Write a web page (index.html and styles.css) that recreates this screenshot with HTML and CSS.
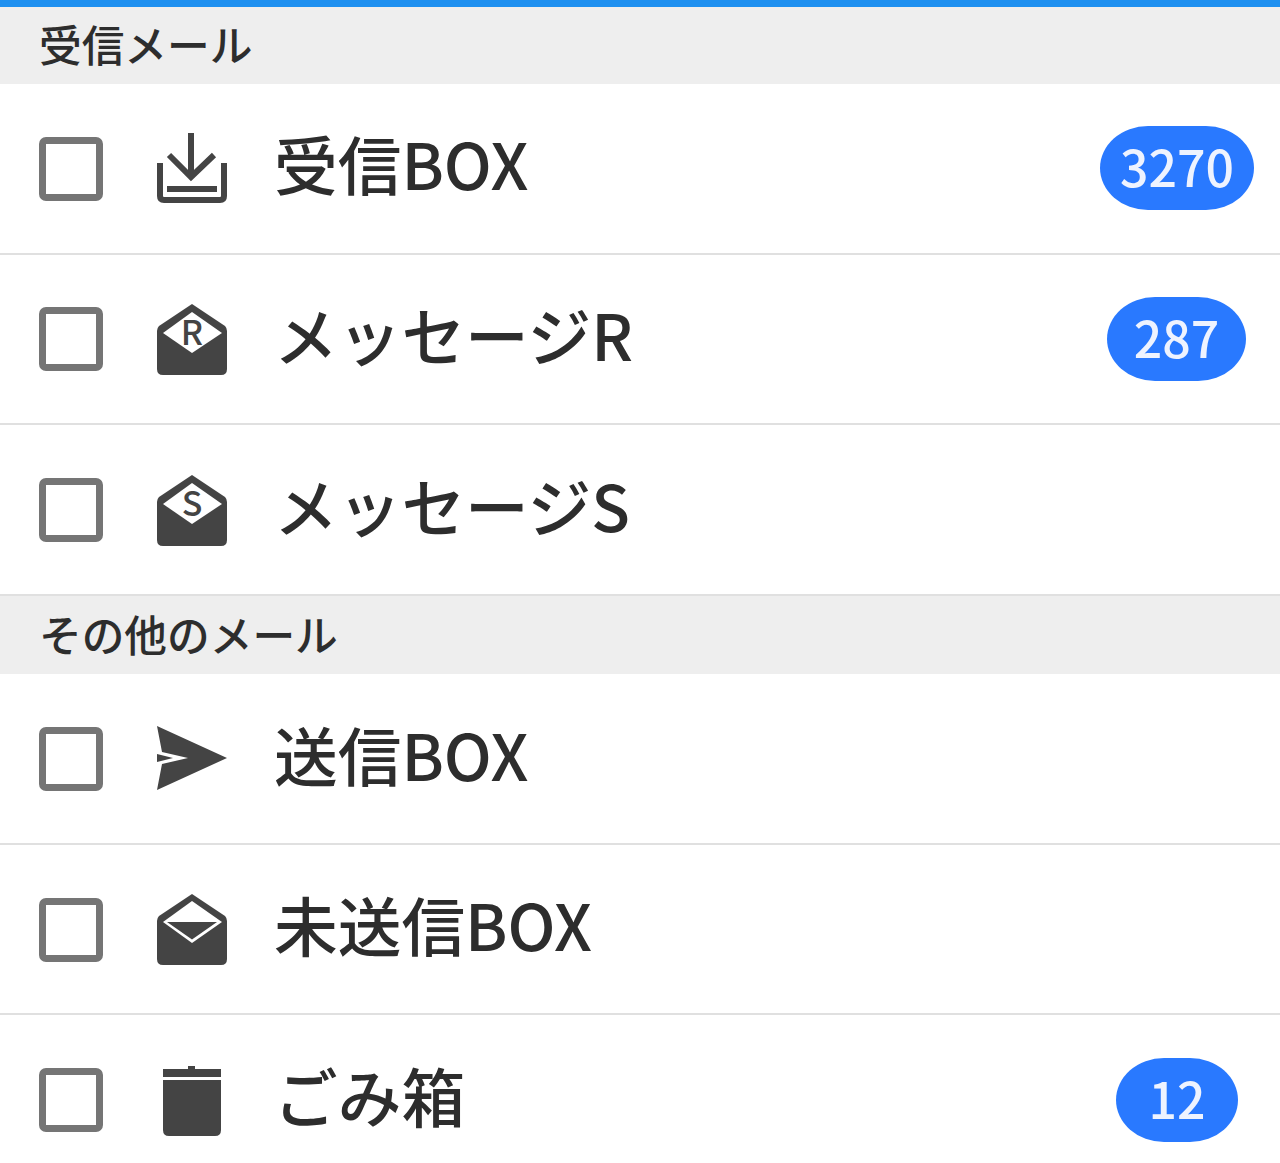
FILE: index.html
```html
<!DOCTYPE html>
<html lang="ja">
<head>
  <meta charset="UTF-8">
  <meta name="viewport" content="width=device-width, initial-scale=1.0">
  <title>メール</title>
  <link rel="stylesheet" href="styles.css">
</head>
<body>

<div class="top-bar"></div>

<div class="mail-page">
  <!-- 受信メール -->
  <h2 class="section-title">受信メール</h2>
  <ul class="folder-list">
    <li class="folder-row">
      <span class="check"></span>
      <svg class="folder-icon" viewBox="0 0 74 74">
        <path class="line" d="M36 1V45M14 23L36 45L59 23"/>
        <rect class="fill" x="12" y="54" width="50" height="6"/>
        <path class="line" d="M5 31V64q0 4 4 4H65q4 0 4-4V31"/>
      </svg>
      <span class="folder-name">受信BOX</span>
      <span class="badge badge-4">3270</span>
    </li>
    <li class="folder-row">
      <span class="check"></span>
      <svg class="folder-icon" viewBox="0 0 74 74">
        <path class="fill" d="M37 1L70 23q2 2 2 5V66q0 6-6 6H8q-6 0-6-6V28q0-3 2-5Z"/>
        <path class="hole" d="M37 9L67 30L37 50L8 30Z"/>
        <text class="icon-letter" x="37" y="42">R</text>
      </svg>
      <span class="folder-name">メッセージR</span>
      <span class="badge badge-3">287</span>
    </li>
    <li class="folder-row">
      <span class="check"></span>
      <svg class="folder-icon" viewBox="0 0 74 74">
        <path class="fill" d="M37 1L70 23q2 2 2 5V66q0 6-6 6H8q-6 0-6-6V28q0-3 2-5Z"/>
        <path class="hole" d="M37 9L67 30L37 50L8 30Z"/>
        <text class="icon-letter" x="37" y="42">S</text>
      </svg>
      <span class="folder-name">メッセージS</span>
    </li>
  </ul>

  <!-- その他のメール -->
  <h2 class="section-title">その他のメール</h2>
  <ul class="folder-list">
    <li class="folder-row">
      <span class="check"></span>
      <svg class="folder-icon" viewBox="0 0 74 74">
        <path class="fill" d="M2 4L72 36L2 68L7 42L33 36L7 30Z"/>
        <path class="fill" d="M2 32L18 36L2 40Z"/>
      </svg>
      <span class="folder-name">送信BOX</span>
    </li>
    <li class="folder-row">
      <span class="check"></span>
      <svg class="folder-icon" viewBox="0 0 74 74">
        <path class="fill" d="M37 1L70 23q2 2 2 5V66q0 6-6 6H8q-6 0-6-6V28q0-3 2-5Z"/>
        <path class="hole" d="M37 8L67 29L37 50L8 29Z"/>
        <path class="fill" d="M12 29H62L37 46.5Z"/>
      </svg>
      <span class="folder-name">未送信BOX</span>
    </li>
    <li class="folder-row">
      <span class="check"></span>
      <svg class="folder-icon" viewBox="0 0 74 74">
        <rect class="fill" x="33" y="2" width="7" height="5"/>
        <rect class="fill" x="8" y="5" width="58" height="8"/>
        <path class="fill" d="M8 16H66V66q0 6-6 6H14q-6 0-6-6Z"/>
      </svg>
      <span class="folder-name">ごみ箱</span>
      <span class="badge badge-2">12</span>
    </li>
  </ul>
</div>

</body>
</html>
```

FILE: styles.css
```css
/* General Styles */
body {
  font-family: "Noto Sans CJK JP", "Noto Sans", sans-serif;
  font-weight: 500;
  background-color: #fff;
  color: #2d2d2d;
  margin: 0;
}

/* sits over the top of the first section title */
.top-bar {
  position: relative;
  height: 7px;
  margin-bottom: -1.2px;
  background-color: #1e90f0;
}

.section-title {
  display: flex;
  align-items: center;
  box-sizing: border-box;
  height: 78.2px;
  margin: 0;
  padding: 0 0 3px 39px;
  background-color: #eee;
  font-size: 42.7px;
  font-weight: 500;
  line-height: 1;
}

/* Folder rows */
.folder-list {
  list-style: none;
  margin: 0;
  padding: 0;
}

.folder-row {
  display: flex;
  align-items: center;
  box-sizing: border-box;
  height: 170.67px;
  padding-left: 39px;
  border-bottom: 2px solid #e0e0e0;
}

.check {
  box-sizing: border-box;
  width: 64px;
  height: 64px;
  margin: 1px 52px 0 0;
  border: 7px solid #757575;
  border-radius: 7px;
}

.folder-icon {
  flex: none;
  width: 74px;
  height: 74px;
  margin: 2px 45px 0 0;
}

.fill {
  fill: #444;
}

.hole {
  fill: #fff;
}

.line {
  fill: none;
  stroke: #444;
  stroke-width: 6;
}

.icon-letter {
  fill: #444;
  font-size: 34px;
  font-weight: 500;
  text-anchor: middle;
}

.folder-name {
  padding-bottom: 10px;
  font-size: 63.7px;
  line-height: 1;
}

/* Count badge */
.badge {
  display: flex;
  justify-content: center;
  align-items: center;
  box-sizing: border-box;
  height: 84px;
  margin-left: auto;
  padding-bottom: 6px;
  border-radius: 48px / 42px;
  background-color: #2979ff;
  color: #eef3ff;
  font-size: 50px;
  line-height: 1;
}

.badge-4 {
  width: 154px;
  margin-right: 26px;
}

.badge-3 {
  width: 139px;
  margin-right: 34px;
}

.badge-2 {
  width: 122px;
  margin-right: 42px;
}
```
